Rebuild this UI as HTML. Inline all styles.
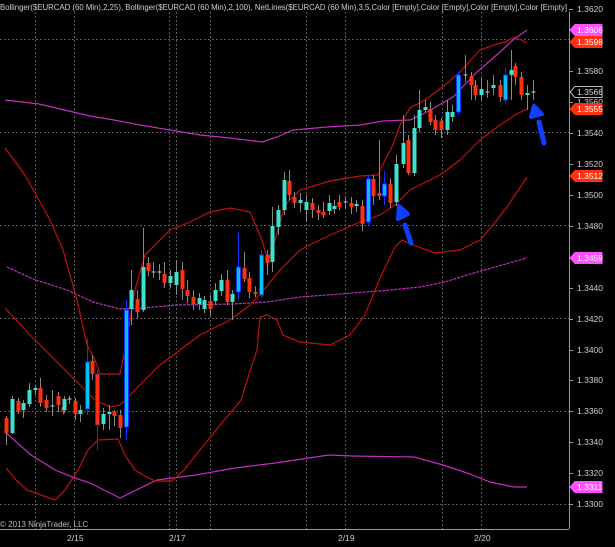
<!DOCTYPE html>
<html><head><meta charset="utf-8"><style>
html,body{margin:0;padding:0;background:#000;width:615px;height:547px;overflow:hidden}
svg{display:block}
text{font-family:"Liberation Sans",sans-serif}
</style></head><body>
<svg id="s" width="615" height="547" viewBox="0 0 615 547" xmlns="http://www.w3.org/2000/svg">
<rect width="615" height="547" fill="#000"/>
<g stroke="#5a5a5a" stroke-width="1" stroke-dasharray="2,2">
<line x1="0" y1="39.5" x2="569" y2="39.5"/><line x1="0" y1="132.5" x2="569" y2="132.5"/><line x1="0" y1="225.5" x2="569" y2="225.5"/><line x1="0" y1="318.5" x2="569" y2="318.5"/><line x1="0" y1="411.5" x2="569" y2="411.5"/><line x1="0" y1="504.5" x2="569" y2="504.5"/>
<line x1="35.5" y1="12" x2="35.5" y2="529"/><line x1="74.5" y1="12" x2="74.5" y2="529"/><line x1="169.5" y1="12" x2="169.5" y2="529"/><line x1="176.5" y1="12" x2="176.5" y2="529"/><line x1="210.5" y1="12" x2="210.5" y2="529"/><line x1="306.5" y1="12" x2="306.5" y2="529"/><line x1="345.5" y1="12" x2="345.5" y2="529"/><line x1="442.5" y1="12" x2="442.5" y2="529"/><line x1="481.5" y1="12" x2="481.5" y2="529"/>
</g>
<g fill="none" stroke-width="1.2">
<polyline stroke="#c030c0" points="5,100 39,104 90,116 114,120 140,125 170,130 200,135 230,138 262,142 277,137 293,130 327,127 360,125 383,121 410,120 427,112 453,97 477,72 500,52 513,40 527,30"/>
<polyline stroke="#c030c0" stroke-dasharray="3,1" points="7,267 33,279 67,290 93,302 120,309 143,308 177,305 233,304 267,302 300,297 340,294 380,291 420,287 445,282 467,275 495,267 527,258"/>
<polyline stroke="#c030c0" points="5,432 31,455 55,470 75,478 90,483 120,498 157,480 196,475 235,468 275,463 329,455 353,456 414,457 443,465 467,473 490,482 514,487 527,487"/>
<polyline stroke="#c01010" points="5,148 25,175 50,220 63,250 77,300 87,345 95,360 100,374 120,374 125,350 135,290 145,255 170,230 190,222 210,212 230,208 250,212 262,240 268,262 275,240 285,205 300,190 330,181 360,176 378,175 385,160 393,145 400,125 410,108 425,100 445,85 460,72 480,50 497,44 505,42 515,37 527,43"/>
<polyline stroke="#c01010" points="5,308 30,335 60,365 95,400 110,407 120,405 135,390 160,365 200,335 230,320 250,305 262,292 280,270 300,250 330,235 360,222 380,215 395,205 410,190 440,175 460,160 480,140 500,125 515,115 527,109"/>
<polyline stroke="#c01010" points="6,468 16,480 27,490 55,500 65,490 78,470 88,450 98,440 118,439 125,455 135,470 143,475 155,481 172,481 184,470 204,445 220,425 233,410 241,400 252,365 257,350 260,317 267,315 277,320 283,335 300,342 330,345 350,335 365,315 380,278 395,247 402,240 413,245 435,253 460,250 480,240 493,225 507,207 527,177"/>
</g>
<g id="c"></g>
<g fill="#1040ff" stroke="#1040ff" stroke-linecap="round">
<line x1="405" y1="225" x2="411" y2="243" stroke-width="5"/><polygon points="398,219 408,214 399,206 " stroke-width="4" stroke-linejoin="round"/>
<line x1="539" y1="122" x2="544" y2="143" stroke-width="5"/><polygon points="531,117 542,114 534,106" stroke-width="4" stroke-linejoin="round"/>
</g>
<line x1="569.5" y1="12" x2="569.5" y2="529" stroke="#999"/>
<line x1="0" y1="529.5" x2="569" y2="529.5" stroke="#999"/>
<g fill="#cfcfcf" font-size="8.5" id="ax"></g>
<text x="0" y="10" fill="#cfcfcf" font-size="8" textLength="567" lengthAdjust="spacingAndGlyphs">Bollinger($EURCAD (60 Min),2,25), Bollinger($EURCAD (60 Min),2,100), NetLines($EURCAD (60 Min),3,5,Color [Empty],Color [Empty],Color [Empty],Color [Empty]</text>
<text x="0" y="527" fill="#bbb" font-size="8">© 2013 NinjaTrader, LLC</text>
<g fill="#cfcfcf" font-size="8.5"><text x="67" y="541">2/15</text><text x="169" y="541">2/17</text><text x="338" y="541">2/19</text><text x="474" y="541">2/20</text></g>
<g font-size="8.5" id="lb"></g>
</svg>
<script>
var NS="http://www.w3.org/2000/svg";
function el(p,t,a,txt){var e=document.createElementNS(NS,t);for(var k in a)e.setAttribute(k,a[k]);if(txt)e.textContent=txt;p.appendChild(e);return e;}
// x, bodyTop, bodyBot, wickTop, wickBot, type r=red c=cyan b=blue d=doji
var C=[[6,418,433,416,445,'r'],[12,399,433,396,434,'c'],[18,401,411,398,414,'r'],[23,403,410,400,418,'c'],[29,390,404,383,407,'c'],[35,388,390,386,395,'c'],[40,388,403,378,407,'r'],[46,400,408,395,412,'r'],[52,405,407,390,416,'d'],[58,396,405,392,412,'r'],[63,407,411,400,414,'r'],[64,399,410,396,413,'c'],[69,398,400,396,404,'d'],[75,401,414,398,420,'r'],[80,410,414,405,422,'c'],[87,362,409,338,415,'b'],[92,361,374,355,380,'r'],[97,374,425,370,450,'R'],[103,414,424,408,430,'c'],[109,412,414,405,430,'c'],[114,412,416,410,426,'r'],[120,415,428,410,438,'r'],[126,310,427,300,440,'b'],[131,290,309,270,325,'c'],[137,299,312,290,318,'r'],[143,267,310,228,312,'c'],[148,263,271,257,276,'r'],[153,271,273,262,278,'d'],[159,271,273,264,280,'d'],[164,274,283,262,288,'r'],[170,276,283,270,288,'c'],[176,272,285,260,295,'c'],[182,270,289,262,300,'r'],[187,290,296,280,303,'r'],[193,297,304,290,310,'r'],[199,298,304,293,310,'c'],[204,300,309,296,313,'c'],[210,301,309,295,316,'r'],[215,290,301,283,305,'c'],[221,280,291,274,296,'c'],[227,280,302,270,305,'r'],[232,294,302,290,320,'c'],[238,267,292,232,300,'b'],[244,268,279,252,282,'r'],[249,278,292,272,298,'r'],[255,292,294,286,297,'r'],[261,255,295,250,298,'b'],[267,255,263,250,275,'r'],[272,226,262,207,272,'c'],[278,210,227,205,235,'c'],[284,180,210,172,215,'c'],[289,181,195,170,200,'r'],[294,197,203,192,208,'r'],[300,200,203,193,212,'c'],[306,202,210,195,222,'c'],[312,203,210,198,218,'r'],[318,210,213,205,220,'r'],[323,212,215,202,218,'r'],[329,203,211,195,215,'c'],[334,206,209,200,214,'c'],[339,202,207,195,210,'r'],[345,201,203,196,208,'d'],[351,203,207,197,214,'r'],[356,204,206,200,212,'c'],[362,206,224,200,231,'r'],[368,179,222,176,225,'b'],[373,179,196,175,205,'r'],[379,193,196,140,200,'r'],[384,184,196,171,205,'b'],[390,184,203,178,208,'r'],[396,164,202,155,206,'c'],[403,143,164,115,168,'c'],[408,140,173,135,175,'r'],[414,128,173,115,176,'c'],[419,110,128,90,132,'c'],[425,107,110,100,112,'c'],[430,109,122,102,125,'r'],[435,120,130,115,135,'r'],[441,121,130,118,138,'r'],[447,112,130,100,135,'c'],[452,112,117,105,122,'c'],[458,75,112,72,115,'b'],[465,74,76,55,82,'d'],[471,76,85,72,100,'r'],[475,85,95,80,100,'r'],[481,89,95,78,100,'c'],[487,91,93,80,98,'d'],[493,85,88,75,95,'c'],[500,85,97,80,102,'r'],[505,75,100,68,103,'b'],[511,70,75,50,100,'c'],[515,66,77,63,85,'r'],[521,77,95,72,100,'r'],[527,93,95,85,110,'c'],[533,91,93,80,100,'d']];
var g=document.getElementById('c');
C.forEach(function(c){var x=c[0],t=c[5];
var wc=(t=='b'||t=='R')?'#1030ff':'#888';
el(g,'line',{x1:x+0.5,y1:c[3],x2:x+0.5,y2:c[4],stroke:wc,'stroke-width':1});
var f=t=='r'?'#ff3010':t=='R'?'#ff3010':t=='c'?'#40e0d0':t=='b'?'#00c0ff':'#aaa';
var h=Math.max(1,c[2]-c[1]);
if(t=='d'){el(g,'line',{x1:x-1.5,y1:c[1]+1,x2:x+2.5,y2:c[1]+1,stroke:'#ccc'});return;}
el(g,'rect',{x:x-1.5,y:c[1],width:4,height:h,fill:f,stroke:(t=='b'||t=='R')?'#1030ff':'none','stroke-width':(t=='b'||t=='R')?1:0});
});
var ax=document.getElementById('ax');
[[9,'1.3620'],[71,'1.3580'],[102,'1.3560'],[133,'1.3540'],[164,'1.3520'],[195,'1.3500'],[226,'1.3480'],[288,'1.3440'],[319,'1.3420'],[350,'1.3400'],[380,'1.3380'],[411,'1.3360'],[442,'1.3340'],[473,'1.3320'],[504,'1.3300']].forEach(function(a){
el(ax,'line',{x1:569,y1:a[0]+0.5,x2:573,y2:a[0]+0.5,stroke:'#999'});
el(ax,'text',{x:577,y:a[0]+3},a[1]);});
var lb=document.getElementById('lb');
[[30,'1.3606','#ff50ff','#fff'],[42,'1.3598','#ff3010','#fff'],[92,'1.3566','#000','#ddd'],[109,'1.3555','#ff3010','#fff'],[176,'1.3512','#ff3010','#fff'],[258,'1.3459','#ff50ff','#fff'],[487,'1.3311','#ff50ff','#fff']].forEach(function(a){
var y=a[0];
el(lb,'polygon',{points:'570,'+y+' 575,'+(y-5.5)+' 602,'+(y-5.5)+' 602,'+(y+5.5)+' 575,'+(y+5.5),fill:a[2],stroke:a[2]=='#000'?'#bbb':a[2]});
el(lb,'text',{x:577,y:y+3,fill:a[3]},a[1]);});
</script>
</body></html>
